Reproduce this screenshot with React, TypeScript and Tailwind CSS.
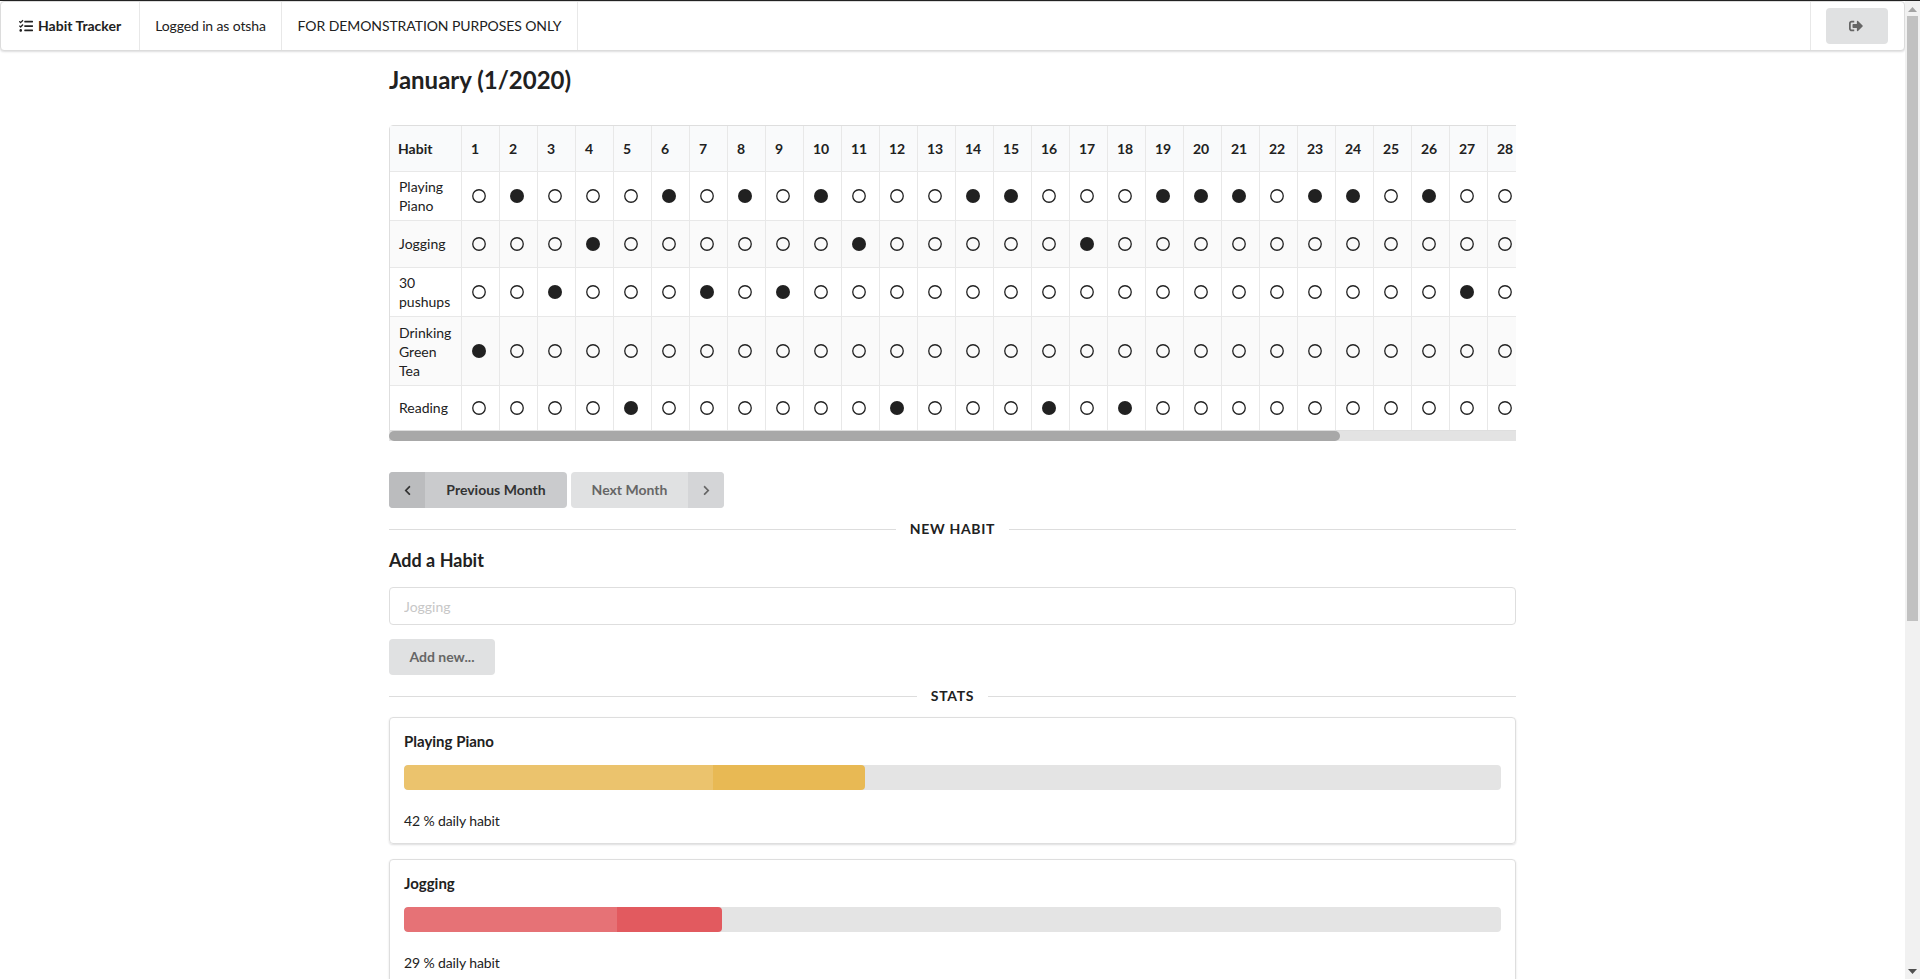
import { FaTasks, FaSignOutAlt, FaChevronLeft, FaChevronRight } from 'react-icons/fa'

const days = Array.from({ length: 28 }, (_, i) => i + 1)

const habits = [
  { name: 'Playing Piano', done: [2, 6, 8, 10, 14, 15, 19, 20, 21, 23, 24, 26], h: 'h-[49px]' },
  { name: 'Jogging', done: [4, 11, 17], h: 'h-[47px] pb-[2px]' },
  { name: '30 pushups', done: [3, 7, 9, 27], h: 'h-[49px]' },
  { name: 'Drinking Green Tea', done: [1], h: 'h-[69px]' },
  { name: 'Reading', done: [5, 12, 16, 18], h: 'h-[45px] pb-[2px]' },
]

const stats = [
  { name: 'Playing Piano', pct: 42, bar: 'bg-[#e8b954]' },
  { name: 'Jogging', pct: 29, bar: 'bg-[#e25a5f]' },
]

function Dot({ on }: { on: boolean }) {
  return (
    <svg width="14" height="14" viewBox="0 0 14 14" className="ml-[10px] block">
      <circle cx="7" cy="7" r={on ? 7 : 6.25} fill={on ? '#212121' : 'none'} stroke={on ? 'none' : '#212121'} strokeWidth="1.3" />
    </svg>
  )
}

function Divider({ label }: { label: string }) {
  return (
    <div className="flex items-center gap-[14px] h-[20px]">
      <div className="flex-1 h-px bg-[#dddddd]" />
      <span className="text-sm font-bold uppercase tracking-[0.05em] text-[#212121]">{label}</span>
      <div className="flex-1 h-px bg-[#dddddd]" />
    </div>
  )
}

// headless chrome drops real scrollbars, so the page one is drawn
function PageScrollbar() {
  return (
    <div className="w-[15px] shrink-0 bg-[#f1f1f1] flex flex-col items-center">
      <svg width="9" height="5" viewBox="0 0 9 5" className="mt-[6px] shrink-0">
        <path d="M4.5 0L9 5H0z" fill="#a3a3a3" />
      </svg>
      <div className="mt-[4px] w-[11px] h-[605px] bg-[#c1c1c1]" />
      <svg width="9" height="5" viewBox="0 0 9 5" className="mt-auto mb-[5px] shrink-0">
        <path d="M0 0H9L4.5 5z" fill="#505050" />
      </svg>
    </div>
  )
}

export default function App() {
  return (
    <div className="h-screen flex bg-white text-sm text-[#212121] font-['Lato','Liberation_Sans',sans-serif] border-t border-[#222222] overflow-hidden">
      <div className="flex-1 min-w-0">
        <div className="flex h-[50px] border border-[#dcdcdc] rounded shadow-[0_1px_2px_rgba(34,36,38,0.15)] bg-white">
          <div className="flex items-center gap-[5px] w-[139px] pl-[18px] border-r border-[#e8e8e8] font-bold">
            <FaTasks className="text-[14px]" />
            Habit Tracker
          </div>
          <div className="flex items-center justify-center w-[142px] border-r border-[#e8e8e8] tracking-[-0.12px]">Logged in as otsha</div>
          <div className="flex items-center justify-center w-[296px] border-r border-[#e8e8e8] tracking-[-0.08px]">FOR DEMONSTRATION PURPOSES ONLY</div>
          <div className="ml-auto flex items-center w-[94px] pl-[15px] border-l border-[#e8e8e8]">
            <button className="w-[62px] h-[36px] pr-[3px] rounded bg-[#e0e1e2] text-[#666666] flex items-center justify-center">
              <FaSignOutAlt className="text-[14px]" />
            </button>
          </div>
        </div>

        <div className="w-[1127px] mx-auto">
          <h2 className="mt-[13px] text-[24px] leading-[31px] font-bold">January (1/2020)</h2>

          <div className="mt-[30px] overflow-hidden">
            <table className="w-[1136px] table-fixed border-separate border-spacing-0 border border-[#dedede] rounded-t">
              <thead>
                <tr className="bg-[#f9fafb]">
                  <th className="w-[71px] h-[45px] pl-[8px] text-left font-bold">Habit</th>
                  {days.map((d) => (
                    <th key={d} className="w-[38px] pl-[9px] text-left font-bold border-l border-[#e8e8e8]">{d}</th>
                  ))}
                </tr>
              </thead>
              <tbody>
                {habits.map((h, idx) => (
                  <tr key={h.name} className={idx % 2 === 1 ? 'bg-[#fafafa]' : 'bg-white'}>
                    <td className={`pl-[9px] pr-[4px] leading-[19px] border-t border-[#e8e8e8] ${h.h}`}>{h.name}</td>
                    {days.map((d) => (
                      <td key={d} className="border-t border-l border-[#e8e8e8]">
                        <Dot on={h.done.includes(d)} />
                      </td>
                    ))}
                  </tr>
                ))}
              </tbody>
            </table>
          </div>
          <div className="h-[10px] bg-[#e3e3e3]">
            <div className="h-full w-[951px] rounded-[5px] bg-[#a8a8a8]" />
          </div>

          <div className="mt-[31px] flex gap-[4px]">
            <button className="flex h-[36px] w-[178px] rounded overflow-hidden bg-[#cacbcd] font-bold text-[#333333]">
              <span className="w-[36px] h-full bg-[#bbbcbe] flex items-center justify-center">
                <FaChevronLeft className="text-[11px]" />
              </span>
              <span className="flex-1 h-full flex items-center justify-center">Previous Month</span>
            </button>
            <button className="flex h-[36px] w-[153px] rounded overflow-hidden bg-[#e0e1e2] font-bold text-[#666666]">
              <span className="flex-1 h-full flex items-center justify-center">Next Month</span>
              <span className="w-[36px] h-full bg-[#d4d5d7] flex items-center justify-center">
                <FaChevronRight className="text-[11px]" />
              </span>
            </button>
          </div>

          <div className="mt-[11px]"><Divider label="New Habit" /></div>
          <h4 className="mt-[10px] text-[18px] leading-[23px] font-bold">Add a Habit</h4>
          <input
            placeholder="Jogging"
            className="mt-[15px] block w-full h-[38px] px-[14px] rounded border border-[#dedede] bg-white placeholder:text-[#c7c7c7] outline-none"
          />
          <button className="mt-[14px] block h-[36px] w-[106px] rounded bg-[#e0e1e2] font-bold text-[#666666]">Add new...</button>
          <div className="mt-[11px]"><Divider label="Stats" /></div>

          <div className="mt-[11px] flex flex-col gap-[15px]">
            {stats.map((s) => (
              <div key={s.name} className="h-[127px] border border-[#dedede] rounded shadow-[0_1px_2px_rgba(34,36,38,0.15)] px-[14px] pt-[13px]">
                <div className="text-[15px] font-bold leading-[20px]">{s.name}</div>
                <div className="mt-[14px] h-[25px] rounded bg-[#e4e4e4] overflow-hidden">
                  <div className={`h-full rounded ${s.bar}`} style={{ width: `${s.pct}%` }}>
                    <div className="h-full w-[67%] bg-white/15 rounded-l" />
                  </div>
                </div>
                <div className="mt-[21px] leading-[20px] tracking-[-0.12px]">{s.pct} % daily habit</div>
              </div>
            ))}
          </div>
        </div>
      </div>
      <PageScrollbar />
    </div>
  )
}
